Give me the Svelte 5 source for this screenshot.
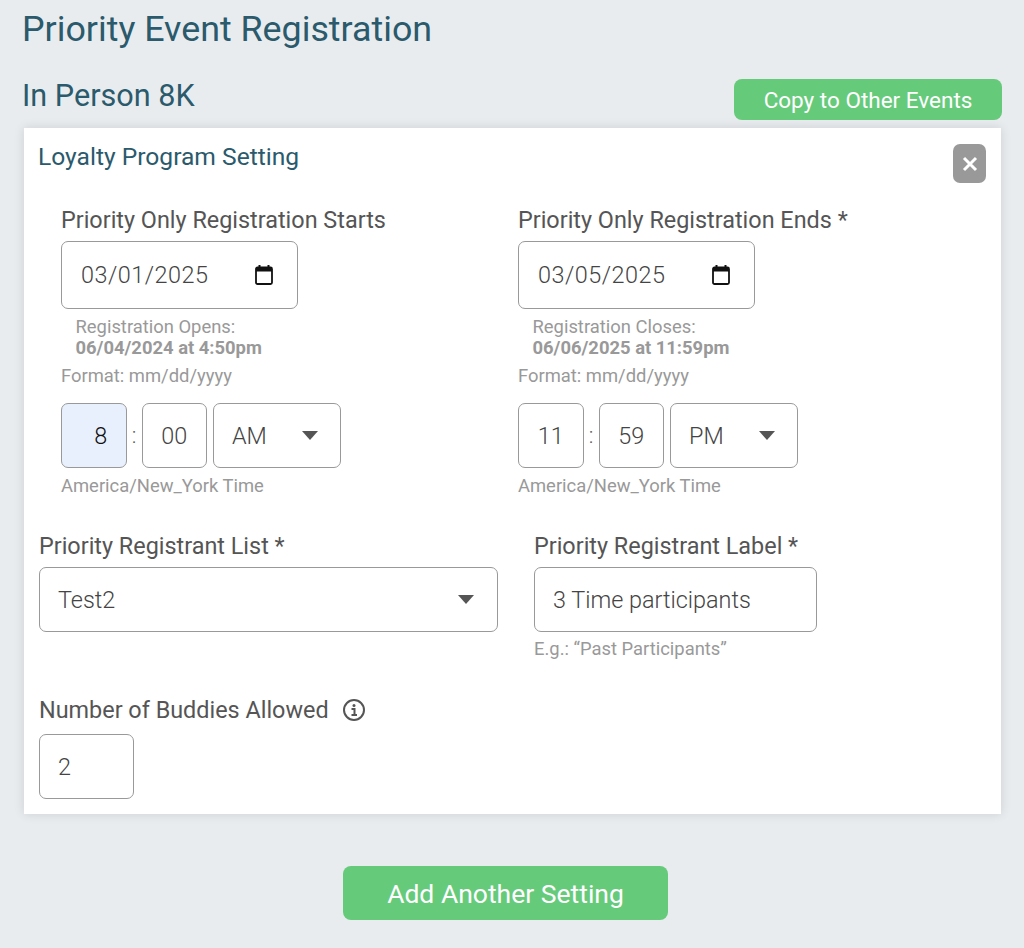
<script>
  const cols = [
    { label: 'Priority Only Registration Starts', date: '03/01/2025', note: 'Registration Opens:', when: '06/04/2024 at 4:50pm', h: '8', m: '00', ap: 'AM', focus: true },
    { label: 'Priority Only Registration Ends *', date: '03/05/2025', note: 'Registration Closes:', when: '06/06/2025 at 11:59pm', h: '11', m: '59', ap: 'PM', focus: false }
  ];
</script>

<div class="page">
  <h1>Priority Event Registration</h1>
  <div class="event-head">
    <h2>In Person 8K</h2>
    <button class="copy">Copy to Other Events</button>
  </div>
  <section class="card">
    <div class="card-head">
      <h3>Loyalty Program Setting</h3>
      <button class="close" aria-label="Close">
        <svg viewBox="0 0 16 16" width="16" height="16"><path d="M2 2 14 14M14 2 2 14" stroke="#fff" stroke-width="3" fill="none"/></svg>
      </button>
    </div>
    <div class="dates">
      {#each cols as c}
        <div class="col">
          <div class="label">{c.label}</div>
          <div class="field date">
            <span>{c.date}</span>
            <svg viewBox="0 0 18 20" width="18" height="20"><path d="M4.5 0v3M13.5 0v3" stroke="#111" stroke-width="2" fill="none"/><rect x="1" y="2.5" width="16" height="16.5" rx="1.5" fill="none" stroke="#111" stroke-width="1.8"/><rect x="1" y="2.5" width="16" height="4" fill="#111"/></svg>
          </div>
          <div class="note"><div>{c.note}</div><strong>{c.when}</strong></div>
          <div class="hint fmt">Format: mm/dd/yyyy</div>
          <div class="time">
            <div class="field tbox" class:focus={c.focus}>{c.h}</div>
            <span class="colon">:</span>
            <div class="field tbox">{c.m}</div>
            <div class="field ampm"><span>{c.ap}</span><i class="caret"></i></div>
          </div>
          <div class="hint tz">America/New_York Time</div>
        </div>
      {/each}
    </div>
    <div class="lists">
      <div class="list-col">
        <div class="label">Priority Registrant List *</div>
        <div class="field select"><span>Test2</span><i class="caret"></i></div>
      </div>
      <div class="label-col">
        <div class="label">Priority Registrant Label *</div>
        <div class="field text">3 Time participants</div>
        <div class="hint eg">E.g.: “Past Participants”</div>
      </div>
    </div>
    <div class="buddies">
      <div class="label with-icon">Number of Buddies Allowed
        <svg viewBox="0 0 24 24" width="24" height="24"><circle cx="12" cy="12" r="10" fill="none" stroke="#555" stroke-width="2"/><circle cx="12" cy="7.6" r="1.5" fill="#555"/><path d="M9.5 11h3v6M9.5 17h5.5" stroke="#555" stroke-width="2" fill="none"/></svg>
      </div>
      <div class="field num">2</div>
    </div>
  </section>
  <div class="add-wrap"><button class="add">Add Another Setting</button></div>
</div>

<style>
  :global(body) { margin: 0; background: #e9ecef; font-family: Roboto, "Liberation Sans", sans-serif; }
  .page { height: 948px; box-sizing: border-box; padding: 10px 22px 0 22px; overflow: hidden; color: #555; }
  h1 { margin: 0; font-size: 35.8px; line-height: 38px; font-weight: 400; color: #2a5a6c; }
  .event-head { display: flex; justify-content: space-between; align-items: flex-end; margin-top: 31px; }
  h2 { margin: 0 0 7px; font-size: 30.6px; line-height: 34px; font-weight: 400; color: #2a5a6c; }
  .copy { width: 268px; height: 41px; border: 0; border-radius: 8px; background: #66ca7b; color: #fff; font: 400 22.5px Roboto, sans-serif; }
  .card { margin: 8px 0 0 2px; width: 977px; height: 686px; box-sizing: border-box; background: #fff; box-shadow: 0 0 10px rgba(0,0,0,.12); padding: 14px 15px 0 14px; }
  .card-head { display: flex; justify-content: space-between; align-items: flex-start; }
  h3 { margin: 0; font-size: 24.6px; line-height: 30px; font-weight: 400; color: #2a5a6c; }
  .close { width: 33px; height: 39px; margin-top: 2px; padding: 0; border: 0; border-radius: 7px; background: #999; display: flex; align-items: center; justify-content: center; }
  .dates { display: flex; margin: 23px 0 0 23px; }
  .col { width: 457px; }
  .label { font-size: 23.4px; line-height: 28px; color: #555; }
  .field { box-sizing: border-box; border: 1.5px solid #999; border-radius: 7px; background: #fff; font-size: 23.4px; font-weight: 300; color: #444; display: flex; align-items: center; }
  .date { width: 236.5px; height: 68px; margin-top: 7px; padding: 0 24px 0 19px; justify-content: space-between; letter-spacing: .5px; }
  .note { margin: 7px 0 0 14.5px; font-size: 18.4px; line-height: 21px; color: #999; }
  .note strong { font-weight: 700; }
  .hint { font-size: 18.4px; line-height: 22px; color: #999; }
  .fmt { margin-top: 7px; }
  .time { display: flex; align-items: center; margin-top: 16px; }
  .tbox { width: 65.5px; height: 65px; justify-content: center; }
  .tbox.focus { background: #e8f0fe; color: #111; padding-left: 14px; }
  .colon { width: 15px; text-align: center; font-size: 22px; font-weight: 300; }
  .ampm { width: 128px; height: 65px; margin-left: 6px; padding: 0 22px 0 18px; justify-content: space-between; }
  .caret { width: 0; height: 0; border-left: 8px solid transparent; border-right: 8px solid transparent; border-top: 9px solid #555; }
  .tz { margin-top: 7px; }
  .lists { display: flex; margin: 35px 0 0 1px; }
  .list-col { width: 495px; }
  .select { width: 459px; height: 65px; margin-top: 7px; padding: 0 23px 0 18px; justify-content: space-between; }
  .text { width: 283px; height: 65px; margin-top: 7px; padding-left: 18px; }
  .eg { margin-top: 6px; }
  .buddies { margin: 36px 0 0 1px; }
  .with-icon { display: flex; align-items: center; gap: 13px; }
  .num { width: 95px; height: 65px; margin-top: 10px; padding-left: 18px; }
  .add-wrap { display: flex; justify-content: center; margin: 52px 13px 0 0; }
  .add { width: 325px; height: 54px; border: 0; border-radius: 8px; background: #66ca7b; color: #fff; font: 400 26.5px Roboto, sans-serif; }
</style>
